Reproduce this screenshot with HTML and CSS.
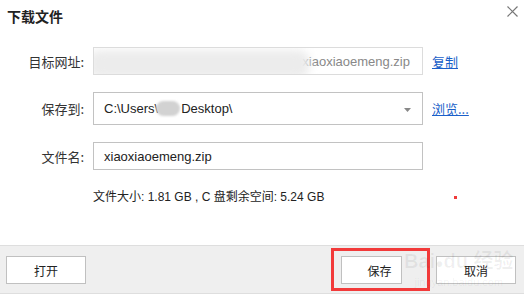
FILE: index.html
```html
<!DOCTYPE html>
<html lang="zh-CN">
<head>
<meta charset="utf-8">
<title>下载文件</title>
<link rel="stylesheet" href="styles.css">
</head>
<body>
<div class="dialog">
  <div class="header">
    <div class="title">下载文件</div>
    <svg class="close" width="11" height="11" viewBox="0 0 11 11"><path d="M0.5 0.5L10.5 10.5M10.5 0.5L0.5 10.5" stroke="#777" stroke-width="1.2" fill="none"/></svg>
  </div>
  <div class="form">
    <div class="label">目标网址:</div>
    <div class="field url">
      <span class="blur"></span>
      <span class="url-text">xiaoxiaoemeng.zip</span>
    </div>
    <a class="link">复制</a>

    <div class="label">保存到:</div>
    <div class="field select">
      <span>C:\Users\</span><span class="blob"></span><span>Desktop\</span>
      <svg class="arrow" width="7" height="4" viewBox="0 0 7 4"><path d="M0 0H7L3.5 4Z" fill="#888"/></svg>
    </div>
    <a class="link">浏览...</a>

    <div class="label">文件名:</div>
    <div class="field name">xiaoxiaoemeng.zip</div>
    <div></div>

    <div></div>
    <div class="info">文件大小: 1.81 GB , C 盘剩余空间: 5.24 GB<span class="dot"></span></div>
  </div>
  <div class="footer">
    <button class="btn">打开</button>
    <div class="spacer"></div>
    <button class="btn save">保存</button>
    <button class="btn cancel">取消</button>
    <div class="highlight"></div>
    <div class="watermark"><span class="wm-big">Bai<span class="paw">●</span>du 经验</span><span class="wm-small">jingyan.baidu.com</span></div>
  </div>
</div>
</body>
</html>
```
FILE: styles.css
```css
* { box-sizing: border-box; }
html, body { margin: 0; padding: 0; background: #fff; }
body {
  width: 524px; height: 296px; overflow: hidden;
  font-family: "Segoe UI", "Noto Sans", "Noto Sans CJK SC", sans-serif;
  color: #222;
}
.dialog { display: flex; flex-direction: column; height: 296px; }
.header {
  display: flex; justify-content: space-between; align-items: flex-start;
  padding: 8px 6px 0 7px; height: 47px;
}
.title {
  font-family: "Noto Sans CJK SC", sans-serif;
  font-size: 14px; font-weight: bold; line-height: 16px; color: #222;
}
.close { margin-top: -2px; }
.form {
  display: grid;
  grid-template-columns: 84px 330px auto;
  column-gap: 9px;
  row-gap: 17px;
  align-items: center;
}
.label {
  text-align: right; font-size: 13px; color: #333;
  font-family: "Noto Sans CJK SC", sans-serif;
}
.field {
  border: 1px solid #c2c2c2; height: 28px; background: #fff;
  display: flex; align-items: center; padding-left: 10px;
  font-size: 13px; color: #222; position: relative;
  font-family: "Segoe UI", "Liberation Sans", "Noto Sans CJK SC", sans-serif;
}
.field.url { border-color: #dcdcdc; justify-content: flex-end; padding-right: 12px; overflow: hidden; }
.url-text { color: #888; }
.blur {
  position: absolute; left: -6px; top: 2px; width: 222px; height: 28px;
  background: #ececec; filter: blur(4px); border-radius: 12px;
}
.field.select { height: 33px; }
.blob {
  display: inline-block; width: 24px; height: 15px; border-radius: 8px;
  background: #d2d2d2; margin: 0 1px 0 -2px; filter: blur(1px);
}
.arrow { position: absolute; right: 11px; top: 15px; }
.link {
  font-size: 13px; color: #1a5fc9; text-decoration: underline;
  font-family: "Noto Sans CJK SC", sans-serif; cursor: pointer;
}
.info {
  grid-column: 2 / 4;
  font-size: 12px; color: #222; line-height: 16px; margin-top: 2px;
  font-family: "Segoe UI", "Liberation Sans", "Noto Sans CJK SC", sans-serif;
  white-space: nowrap; position: relative;
}
.dot { position: absolute; left: 361px; top: 7px; width: 3px; height: 3px; background: #f03a3a; }
.footer {
  margin-top: auto; margin-bottom: 2px; height: 49px;
  background: #efefef; border-top: 1px solid #dedede; border-bottom: 1px solid #dedede;
  display: flex; align-items: flex-start; padding: 10px 8px 0 6px; gap: 34px;
  position: relative;
}
.spacer { flex: 1; }
.btn {
  width: 80px; height: 28px; background: #fff; border: 1px solid #c0c0c0;
  font-family: "Noto Sans CJK SC", sans-serif; font-size: 12px; color: #222;
  padding: 0; margin: 0;
}
.btn.save { width: 61px; padding-left: 16px; }
.highlight {
  position: absolute; left: 331px; top: 2px; width: 99px; height: 43px;
  border: 3px solid #f23a3a;
}
.watermark {
  position: absolute; left: 404px; top: 2px; display: flex; flex-direction: column;
  align-items: center; color: rgba(0,0,0,0.06); pointer-events: none;
  font-family: "Liberation Sans", "Noto Sans CJK SC", sans-serif;
  white-space: nowrap;
}
.wm-big { font-size: 20px; font-weight: bold; line-height: 26px; }
.paw { font-size: 14px; }
.wm-small { font-size: 11px; line-height: 12px; }
```
